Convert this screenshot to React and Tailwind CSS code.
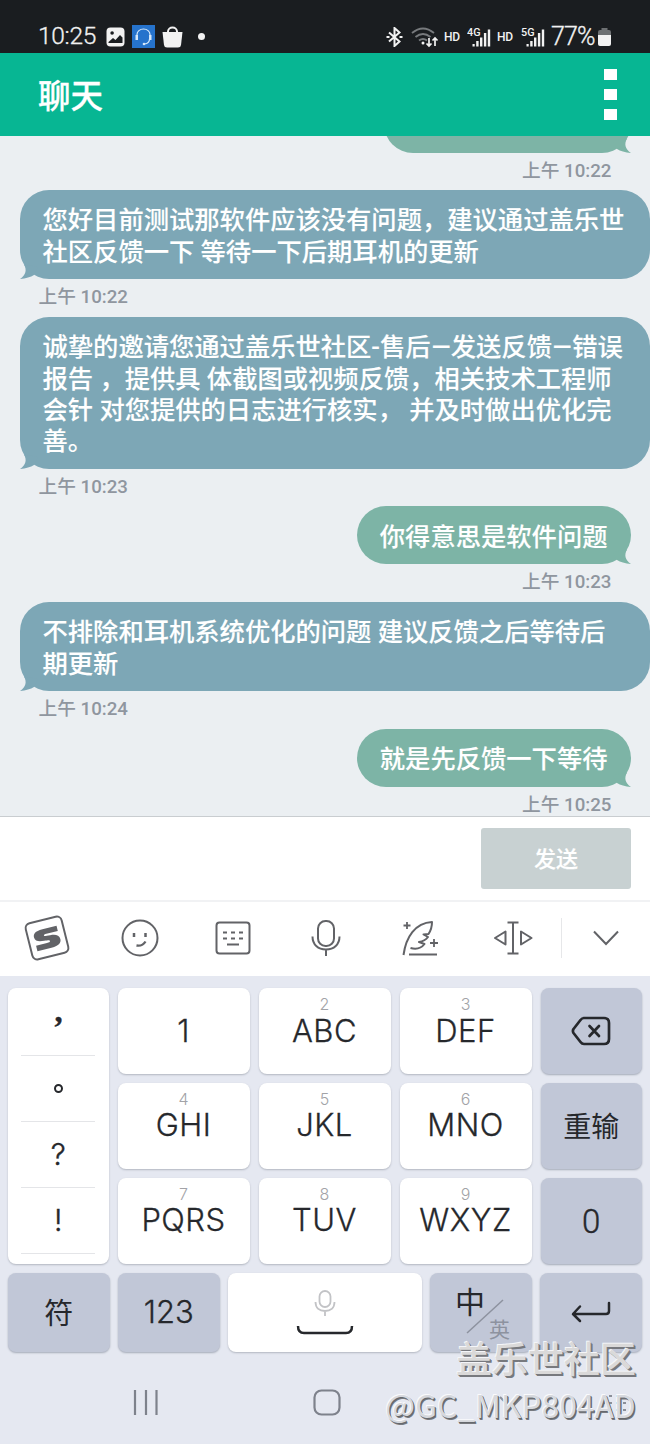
import clsx from 'clsx';

const messages = [
  { from: 'me', lines: [''], time: '10:22', cut: true },
  { from: 'them', lines: ['您好目前测试那软件应该没有问题，建议通过盖乐世', '社区反馈一下 等待一下后期耳机的更新'], time: '10:22' },
  {
    from: 'them',
    lines: ['诚挚的邀请您通过盖乐世社区-售后–发送反馈–错误', '报告 ，提供具 体截图或视频反馈，相关技术工程师', '会针 对您提供的日志进行核实， 并及时做出优化完', '善。'],
    time: '10:23'
  },
  { from: 'me', lines: ['你得意思是软件问题'], time: '10:23' },
  { from: 'them', lines: ['不排除和耳机系统优化的问题 建议反馈之后等待后', '期更新'], time: '10:24' },
  { from: 'me', lines: ['就是先反馈一下等待'], time: '10:25' }
];

const letterKeys = [
  { num: '', label: '1' },
  { num: '2', label: 'ABC' },
  { num: '3', label: 'DEF' },
  { num: '4', label: 'GHI' },
  { num: '5', label: 'JKL' },
  { num: '6', label: 'MNO' },
  { num: '7', label: 'PQRS' },
  { num: '8', label: 'TUV' },
  { num: '9', label: 'WXYZ' }
];

const Signal = ({ label }) => (
  <svg width="25" height="22" viewBox="0 0 25 22" fill="#f2f2f2">
    <text x="0" y="9.500" fontSize="11.500" fontWeight="500" fontFamily="Roboto" textLength="13.500" lengthAdjust="spacingAndGlyphs">
      {label}
    </text>
    <rect x="5.500" y="18" width="2.200" height="2.500" />
    <rect x="9.200" y="15" width="2.400" height="5.500" />
    <rect x="13" y="11.500" width="2.400" height="9" />
    <rect x="16.900" y="7" width="2.400" height="13.500" />
    <rect x="20.800" y="3.500" width="2.400" height="17" />
  </svg>
);

const StatusBar = () => (
  <div className="h-[53px] bg-[#1a1d20] text-[#f2f2f2] pt-5 pl-[38px] pr-[39px] flex justify-between">
    <div className="h-[33px] flex items-center">
      <span className="w-[67px] text-[24.500px] font-[Roboto] font-light tracking-[-0.300px] whitespace-nowrap [-webkit-text-stroke:0.3px_#f2f2f2]">
        10:25
      </span>
      <svg className="ml-px" width="19" height="20" viewBox="0 0 18 20">
        <rect width="18" height="19" y=".5" rx="4" fill="#f2f2f2" />
        <circle cx="5.6" cy="6" r="1.8" fill="#1a1d20" />
        <path d="M2 15l4.500-4 2.500 2 4.500-5 2.500 2.500v5.500H2z" fill="#1a1d20" />
      </svg>
      <svg className="ml-[7px]" width="23" height="23" viewBox="0 0 23 23">
        <rect width="23" height="23" fill="#2673cc" />
        <g fill="none" stroke="#d5e8fa" strokeWidth="1.2">
          <path d="M5 13V9.500a6.500 5.500 0 0 1 13 0V13" />
          <path d="M17.500 14c0 3-1.500 4.500-5 5" />
        </g>
        <path d="M3.500 10h2.500v5h-2.500zM17 10h2.500v5H17z" fill="#d5e8fa" />
        <circle cx="12" cy="19" r="1.300" fill="#d5e8fa" />
      </svg>
      <svg className="ml-[7px]" width="21" height="22" viewBox="0 0 21 22">
        <path d="M6 7V5.500a4.500 4 0 0 1 9 0V7" fill="none" stroke="#f2f2f2" strokeWidth="2" />
        <path d="M.500 6h20l-1.500 13q-.3 2.500-3 2.500H5q-2.700 0-3-2.500z" fill="#f2f2f2" />
      </svg>
      <span className="ml-[15px] size-[7px] rounded-full bg-[#f2f2f2]" />
    </div>
    <div className="h-[33px] flex items-center font-[Roboto]">
      <svg width="17" height="20" viewBox="0 0 17 20" fill="none" stroke="#f2f2f2" strokeWidth="2">
        <path d="M3 5.500l10.500 9-5 4.500V1l5 4.500-10.500 9" />
        <path d="M.5 10h3M13.500 10h3" />
      </svg>
      <svg className="ml-2" width="28" height="22" viewBox="0 0 28 22" fill="none">
        <g stroke="#777a7d" strokeWidth="1.900">
          <path d="M1 7q11-9 22 0" />
          <path d="M4.500 11q7.500-6 15 0" />
          <path d="M8 14.500q4-3 8 0" />
        </g>
        <circle cx="12" cy="17" r="1.500" fill="#f2f2f2" />
        <path d="M18 12v8M15.500 17.500l2.500 2.500 2.500-2.500M24 20v-8M21.500 14.500l2.500-2.500 2.500 2.500" stroke="#f2f2f2" strokeWidth="1.700" />
      </svg>
      <span className="ml-[5px] w-[17px] text-[12px] font-medium tracking-[-0.300px]">HD</span>
      <span className="ml-[6px]"><Signal label="4G" /></span>
      <span className="ml-[5px] w-[17px] text-[12px] font-medium tracking-[-0.300px]">HD</span>
      <span className="ml-[7px]"><Signal label="5G" /></span>
      <span className="ml-[5px] w-[44px] text-[25px] font-light tracking-[-0.900px] whitespace-nowrap [-webkit-text-stroke:0.3px_#f2f2f2]">77%</span>
      <svg className="ml-[3px]" width="13" height="20" viewBox="0 0 13 20">
        <path d="M3.500 1h6v2H11q2 0 2 2v4H0V5q0-2 2-2h1.500z" fill="#6d7072" />
        <path d="M0 8h13v9q0 2-2 2H2q-2 0-2-2z" fill="#f2f2f2" />
      </svg>
    </div>
  </div>
);

// dashes are stretched a little wider than Roboto's own
const renderLine = (line) =>
  line.split(/(–)/).map((part, i) =>
    part === '–' ? (
      <span key={i} className="inline-block w-[20.200px] text-center scale-x-130">–</span>
    ) : (
      part
    )
  );

const Bubble = ({ message }) => {
  const mine = message.from === 'me';

  return (
    <div className={clsx('flex flex-col', mine ? 'items-end pr-[19.500px]' : 'items-start pl-[19.500px]')}>
      <div
        className={clsx(
          'relative rounded-[29px] px-[23px] pt-[15.375px] pb-[11.375px] text-[25.300px] leading-[31.250px] font-medium text-white whitespace-pre [-webkit-text-stroke:0.1px_white]',
          mine ? 'bg-[#7db4a6]' : 'bg-[#7da7b6] w-full',
          message.cut && 'w-[247px] h-[58px]'
        )}
      >
        {message.lines.map((line) => (
          <div key={line} className="h-[31.250px]">{renderLine(line)}</div>
        ))}
        <svg
          className={clsx('absolute bottom-0', mine ? 'right-0 text-[#7db4a6]' : 'left-0 -scale-x-100 text-[#7da7b6]')}
          width="24"
          height="16"
          viewBox="0 0 24 16"
          fill="currentColor"
        >
          <path d="M6 4L20 1.500C17 7 18 12 24 16Q15 15 10 12Z" />
        </svg>
      </div>
      <div className="h-[37.600px] pt-[6px] px-[19px] text-[18.700px] leading-6 font-medium text-[#8f969f]">
        上午 {message.time}
      </div>
    </div>
  );
};

const Toolbar = () => (
  <div className="h-[76px] pb-[2px] bg-white flex items-center border-t-2 border-[#f1f2f4] text-[#626367]">
    <div className="w-[93px] flex justify-center">
      <svg width="46" height="46" viewBox="0 0 46 46">
        <g transform="rotate(-14 23 23)">
          <rect x="4.500" y="4.500" width="37" height="37" rx="5" fill="none" stroke="currentColor" strokeWidth="2" />
          <path d="M34 14H21c-7 0-9 2.500-9 5.500 0 4 3.500 5 8 5.500 4.500.4 5 .6 5 1.500s-1 1.200-3 1.200H12V33h13c7 0 9.500-2.500 9.500-6 0-4-3.500-5.500-8-5.800-4.500-.3-5.500-.4-5.500-1.200 0-.8 1-1 2.500-1H34z" fill="currentColor" transform="translate(-2.900 -1.200) scale(1.120 1.050)" />
        </g>
      </svg>
    </div>
    <div className="w-[93.400px] flex justify-center">
      <svg width="38" height="38" viewBox="0 0 38 38" fill="none" stroke="currentColor" strokeWidth="2">
        <circle cx="19" cy="19" r="17.500" />
        <path d="M13 14v4M24.500 14v4" strokeWidth="2.500" />
        <path d="M15.500 26.500q6 1 9-4" strokeWidth="2.300" />
      </svg>
    </div>
    <div className="w-[93.400px] flex justify-center">
      <svg width="36" height="34" viewBox="0 0 36 34" fill="none" stroke="currentColor" strokeWidth="2">
        <rect x="1.500" y="1.500" width="33" height="31" rx="3" />
        <path d="M8 11.500h4M16 11.500h4M24 11.500h4M8 17.500h4M16 17.500h4M24 17.500h4M12 23.500h12" />
      </svg>
    </div>
    <div className="w-[93.400px] flex justify-center">
      <svg width="32" height="38" viewBox="0 0 32 38" fill="none" stroke="currentColor" strokeWidth="2">
        <rect x="8" y="2" width="16" height="25" rx="7.500" />
        <path d="M2.500 17.500c0 8 5.500 13 13.500 13s13.500-5 13.500-13M16 30.500V37" />
      </svg>
    </div>
    <div className="w-[93.400px] flex justify-center">
      <svg width="38" height="38" viewBox="0 0 38 38" fill="none" stroke="currentColor" strokeWidth="2" strokeLinejoin="round">
        <path d="M2.500 36C5 18 14 4 31 3c0 6-1.500 9-3.500 12l-5 .5 4.500 2.500q-3 4-9 5l5.500 2q-5 6.500-14 4" />
        <path d="M8 35.500h28M6 3v7M2.500 6.500h7M33 20v8M29 24h8" strokeWidth="1.800" />
      </svg>
    </div>
    <div className="w-[93.400px] flex justify-center">
      <svg width="40" height="34" viewBox="0 0 40 34" fill="none" stroke="currentColor" strokeWidth="2" strokeLinejoin="round">
        <path d="M20 1.500v31M14.500 1.500h11M14.500 32.500h11M12.500 10.500v13L2 17zM28 10.500v13L38.500 17z" />
      </svg>
    </div>
    <div className="w-px h-10 ml-px bg-[#e6e7e9]" />
    <div className="flex-1 flex justify-center">
      <svg width="28" height="18" viewBox="0 0 28 18" fill="none" stroke="currentColor" strokeWidth="2">
        <path d="M2 2.500l12 12.500 12-12.500" />
      </svg>
    </div>
  </div>
);

const Key = ({ dark, className, children }) => (
  <div
    className={clsx(
      'relative flex items-center justify-center rounded-[8px] text-[31px] text-[#26282c]',
      dark ? 'bg-[#c1c7d7] shadow-[0_1px_2px_#a5abb8]' : 'bg-white shadow-[0_1px_2px_#b2b6c0]',
      className
    )}
  >
    {children}
  </div>
);

const Keyboard = () => (
  <div className="h-[468px] bg-[#e5e8f1] pt-3 px-2 font-['Inter','Noto_Sans_CJK_SC',sans-serif]">
    <div className="flex gap-[9px] h-[275.500px]">
      <Key className="w-[100.500px] flex-col justify-start! pt-[1.500px]">
        {['，', '。', '?', '!'].map((mark) => (
          <div key={mark} className="h-[66.200px] w-[74px] flex items-center justify-center border-b border-[#e4e5e8] text-[30px] font-light [-webkit-text-stroke:0.4px_#26282c]">
            {mark === '，' && <span className="text-[32px] leading-none font-bold font-['Liberation_Serif'] mt-[10px]">’</span>}
            {mark === '。' && <span className="size-[9px] rounded-full border-2 border-[#26282c]" />}
            {mark !== '，' && mark !== '。' && mark}
          </div>
        ))}
      </Key>
      <div className="grid grid-cols-3 grid-rows-3 gap-[9px] w-[414px]">
        {letterKeys.map((key) => (
          <Key key={key.label}>
            {key.num && <span className="absolute top-[7px] text-[16px] leading-[18px] font-light text-[#a2a3a7]">{key.num}</span>}
            <span className="font-light tracking-[0.500px] [-webkit-text-stroke:0.3px_#26282c]">{key.label}</span>
          </Key>
        ))}
      </div>
      <div className="grid grid-rows-3 gap-[9px] flex-1">
        <Key dark>
          <svg width="40" height="30" viewBox="0 0 40 30" fill="none" stroke="currentColor" strokeWidth="2.700" strokeLinejoin="round" strokeLinecap="round">
            <path d="M13 2h20q5 0 5 5v16q0 5-5 5H13q-2 0-3.500-2L2.500 17q-1.200-2 0-4l7-9Q11 2 13 2z" />
            <path d="M18.500 10l9.500 10M28 10l-9.500 10" />
          </svg>
        </Key>
        <Key dark className="text-[28px]! pt-[2px]">重输</Key>
        <Key dark className="font-[Roboto] font-light text-[33px]! pt-[2px]">
          <span className="[-webkit-text-stroke:0.4px_#26282c]">0</span>
        </Key>
      </div>
    </div>
    <div className="flex gap-[8.500px] h-[79px] mt-[9px]">
      <Key dark className="w-[101.500px] text-[29px]! pt-[3px]">符</Key>
      <Key dark className="w-[101.500px]">
        <span className="font-light [-webkit-text-stroke:0.3px_#26282c]">123</span>
      </Key>
      <Key className="flex-1 flex-col">
        <svg width="58" height="46" viewBox="0 0 58 46" fill="none">
          <g stroke="#c2c3c6" strokeWidth="1.800">
            <rect x="23.500" y="2" width="11" height="16" rx="5.500" />
            <path d="M19.500 13c0 6 4 9 9.500 9s9.500-3 9.500-9M29 22v5" />
          </g>
          <path d="M2 37q0 7 6 7h42q6 0 6-7" stroke="#26282c" strokeWidth="2.500" />
        </svg>
      </Key>
      <Key dark className="w-[101.500px]">
        <span className="absolute left-[25px] top-[10px] text-[30px] leading-[38px]">中</span>
        <svg className="absolute left-9 top-[26px]" width="38" height="35" viewBox="0 0 38 35" stroke="#8d929f" strokeWidth="1.500">
          <path d="M1 34L37 1" />
        </svg>
        <span className="absolute left-[59px] top-[43px] text-[21px] leading-[27px] text-[#8d929f]">英</span>
      </Key>
      <Key dark className="w-[102px]">
        <svg width="40" height="22" viewBox="0 0 40 22" fill="none" stroke="currentColor" strokeWidth="2.500" strokeLinecap="round" strokeLinejoin="round">
          <path d="M38 2v8q0 3-3 3H3M9 5.500L2 13l7 7" />
        </svg>
      </Key>
    </div>
    <div className="relative h-[92px]">
      <svg className="absolute left-[125px] top-[37px]" width="26" height="28" viewBox="0 0 26 28" stroke="#7e828c" strokeWidth="2.200">
        <path d="M2 1v25M13 1v25M23.500 1v25" />
      </svg>
      <svg className="absolute left-[305px] top-[37px]" width="28" height="28" viewBox="0 0 28 28" fill="none" stroke="#7e828c" strokeWidth="2.200">
        <rect x="1.500" y="1.500" width="25" height="24" rx="7" />
      </svg>
      <svg className="absolute left-[490px] top-[43px]" width="26" height="16" viewBox="0 0 26 16" fill="none" stroke="#8b8f99" strokeWidth="2">
        <path d="M2 2l11 11L24 2" />
      </svg>
      <svg className="absolute left-[592px] top-[42px]" width="30" height="22" viewBox="0 0 30 22" fill="none" stroke="#8b8f99" strokeWidth="2" strokeDasharray="3 4">
        <path d="M2 2h26M2 9h26M2 16h26" />
      </svg>
      <div className="absolute right-[6px] -top-[15px] flex flex-col items-end whitespace-nowrap">
        <span className="text-[36px] leading-[46px] font-medium text-[#dad9d9] [text-shadow:-1px_-1px_0_#f4f5f8,1px_1px_0_#77797e,2px_2px_0_#77797e]">
          盖乐世社区
        </span>
        <span className="-mt-[2px] text-[31.500px] leading-[46px] tracking-[0.200px] text-[#d6d8dd] font-['Noto_Sans_CJK_SC',sans-serif] [text-shadow:-1px_-1px_0_#fafafc,1px_1px_0_#65686d,1.5px_1.5px_0_#77797e]">
          @GC_MKP804AD
        </span>
      </div>
    </div>
  </div>
);

const App = () => {
  return (
    <div className="w-[650px] h-[1444px] overflow-hidden flex flex-col font-['Roboto','Noto_Sans_CJK_SC',sans-serif]">
      <StatusBar />

      {/* Title bar */}
      <div className="h-[83px] bg-[#07b693] flex items-center justify-between pl-[38px] pr-[33px]">
        <h1 className="pt-[6px] text-[32.500px] leading-none font-medium text-white [-webkit-text-stroke:0.3px_white]">聊天</h1>
        <div className="flex flex-col gap-[9px]">
          <span className="w-[13px] h-[11px] bg-white" />
          <span className="w-[13px] h-[11px] bg-white" />
          <span className="w-[13px] h-[11px] bg-white" />
        </div>
      </div>

      {/* Messages */}
      <div className="h-[681px] overflow-hidden bg-[#ebeff2] border-b border-[#c9cdd0]">
        <div className="-mt-[41.500px]">
          {messages.map((message, i) => (
            <Bubble key={i} message={message} />
          ))}
        </div>
      </div>

      {/* Composer */}
      <div className="h-[83px] bg-white flex justify-end pt-[11px] pr-[19px]">
        <button className="w-[150px] h-[61px] pt-[2px] rounded-[3px] bg-[#c8d1d2] text-white text-[22px] font-medium [-webkit-text-stroke:0.2px_white]">
          发送
        </button>
      </div>

      <Toolbar />
      <Keyboard />
    </div>
  );
};

export default App;
